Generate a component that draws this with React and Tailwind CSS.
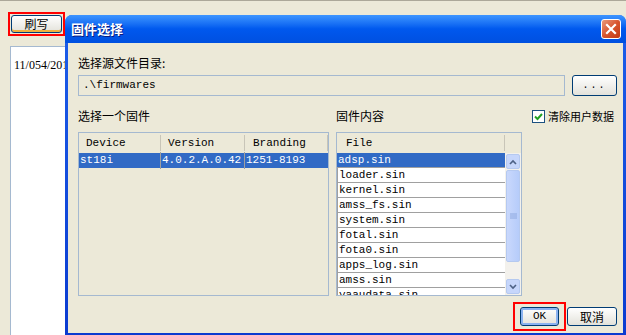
import React from "react";

const cjk = { fontFamily: '"Noto Sans CJK SC", "Liberation Sans", sans-serif' };
const mono = { fontFamily: '"Liberation Mono", "DejaVu Sans Mono", monospace' };

const files = [
  "adsp.sin",
  "loader.sin",
  "kernel.sin",
  "amss_fs.sin",
  "system.sin",
  "fotal.sin",
  "fota0.sin",
  "apps_log.sin",
  "amss.sin",
  "yaaudata.sin",
];

const XpButton = ({ children, focus, className = "" }) => (
  <div
    className={`flex items-center justify-center rounded-[3px] border border-[#003C74] bg-gradient-to-b from-white to-[#E3E2DA] text-[12px] text-black ${
      focus ? "shadow-[inset_0_0_0_2px_#8BB2F0]" : ""
    } ${className}`}
  >
    {children}
  </div>
);

export default function App() {
  return (
    <div className="relative h-[335px] w-[626px] overflow-hidden border-t border-[#ACA899] bg-[#ECE9D8]">
      {/* background window */}
      <div className="ml-[8px] mt-[11px] w-[57px] border-2 border-[#FF0000] p-[1px]">
        <XpButton className="h-[18px] shadow-[inset_0_-2px_0_#F0B040]">
          <span style={cjk}>刷写</span>
        </XpButton>
      </div>
      <div className="ml-[10px] mt-[10px] h-[300px] w-[60px] border border-[#A5B9D0] bg-white pl-[3px] pt-[4px]">
        <span className="whitespace-nowrap text-[12px] text-black" style={{ fontFamily: '"Liberation Serif", serif' }}>
          11/054/2011
        </span>
      </div>

      {/* dialog */}
      <div className="absolute left-[65px] top-[14px] flex h-[321px] w-[561px] flex-col rounded-t-[7px] bg-gradient-to-b from-[#1E5EEA] to-[#0B3BD0]">
        <div className="flex h-[28px] items-center justify-between rounded-t-[7px] bg-gradient-to-b from-[#3D95FF] via-[#0058EE] to-[#0050E0] pl-[6px] pr-[5px]">
          <span className="text-[13px] font-bold text-white [text-shadow:1px_1px_0_#0A1E80]" style={cjk}>
            固件选择
          </span>
          <div className="flex h-[20px] w-[20px] items-center justify-center rounded-[3px] border border-white bg-gradient-to-br from-[#E89A7C] via-[#D8542E] to-[#C23A14]">
            <svg width="12" height="12" viewBox="0 0 12 12">
              <path d="M2 2 L10 10 M10 2 L2 10" stroke="white" strokeWidth="2.2" strokeLinecap="square" />
            </svg>
          </div>
        </div>

        <div className="mx-[3px] mb-[3px] flex flex-1 flex-col bg-[#ECE9D8] pl-[10px] pr-[6px] pt-[11px] text-[12px] text-black" style={cjk}>
          <div className="h-[18px] leading-[18px]">选择源文件目录:</div>
          <div className="mt-[3px] flex h-[21px] gap-[7px]">
            <div className="flex flex-1 items-center border border-[#A5B9D0] bg-[#ECE9D8] pl-[4px] text-[11px]" style={mono}>
              .\firmwares
            </div>
            <XpButton className="w-[45px] text-[#9A8F9A]">
              <span style={mono} className="text-[10px] tracking-[2px]">...</span>
            </XpButton>
          </div>

          <div className="mt-[13px] flex h-[14px] items-center whitespace-nowrap">
            <div className="w-[258px] shrink-0">选择一个固件</div>
            <div className="w-[196px] shrink-0">固件内容</div>
            <div className="flex shrink-0 items-center gap-[3px]">
              <div className="flex h-[13px] w-[13px] items-center justify-center border border-[#1C5180] bg-white">
                <svg width="9" height="9" viewBox="0 0 9 9">
                  <path d="M1 4.5 L3.5 7 L8 2" stroke="#21A121" strokeWidth="2" fill="none" />
                </svg>
              </div>
              <span className="text-[11px]">清除用户数据</span>
            </div>
          </div>

          <div className="mt-[9px] flex h-[164px] gap-[7px]" style={mono}>
            {/* firmware list */}
            <div className="flex w-[251px] shrink-0 flex-col border border-[#A5B9D0] bg-[#ECE9D8]">
              <div className="flex h-[20px] items-center text-[11px]">
                <div className="w-[82px] border-r border-[#C8C5B8] pl-[7px]">Device</div>
                <div className="w-[84px] border-r border-[#C8C5B8] pl-[7px]">Version</div>
                <div className="w-[83px] border-r border-[#C8C5B8] pl-[8px]">Branding</div>
              </div>
              <div className="flex h-[15px] items-center whitespace-nowrap bg-[#316AC5] text-[11px] text-white">
                <div className="w-[82px] border-r border-[#A0A0A0] pl-[1px]">st18i</div>
                <div className="w-[84px] border-r border-[#A0A0A0] pl-[1px]">4.0.2.A.0.42</div>
                <div className="w-[83px] pl-[1px]">1251-8193</div>
              </div>
            </div>

            {/* file list */}
            <div className="flex w-[186px] shrink-0 flex-col border border-[#A5B9D0] bg-[#ECE9D8]">
              <div className="flex h-[20px] items-center text-[11px]">
                <div className="w-[168px] border-r border-[#C8C5B8] pl-[9px]">File</div>
              </div>
              <div className="flex flex-1 overflow-hidden">
                <div className="flex w-[168px] flex-col">
                  {files.map((f, i) => (
                    <div
                      key={f}
                      className={`flex h-[15px] shrink-0 items-center border-b border-[#A0A0A0] pl-[1px] text-[11px] ${
                        i === 0 ? "bg-[#316AC5] text-white" : "border-l bg-white"
                      }`}
                    >
                      {f}
                    </div>
                  ))}
                </div>
                <div className="flex w-[16px] flex-col bg-[#F3F1EC] p-[1px]">
                  <div className="flex h-[15px] items-center justify-center rounded-[2px] border border-[#B5C9F0] bg-[#C6D6FB]">
                    <svg width="8" height="6" viewBox="0 0 8 6">
                      <path d="M1 5 L4 2 L7 5" stroke="#4D6185" strokeWidth="1.6" fill="none" />
                    </svg>
                  </div>
                  <div className="mt-[1px] flex h-[92px] items-center justify-center rounded-[2px] border border-[#B5C9F0] bg-gradient-to-r from-[#C9D8FC] to-[#B6CCFA]">
                    <svg width="7" height="7" viewBox="0 0 7 7">
                      <path d="M0 1 H7 M0 3 H7 M0 5 H7" stroke="#8EA8DF" strokeWidth="1" />
                    </svg>
                  </div>
                  <div className="flex-1" />
                  <div className="flex h-[15px] items-center justify-center rounded-[2px] border border-[#B5C9F0] bg-[#C6D6FB]">
                    <svg width="8" height="6" viewBox="0 0 8 6">
                      <path d="M1 1 L4 4 L7 1" stroke="#4D6185" strokeWidth="1.6" fill="none" />
                    </svg>
                  </div>
                </div>
              </div>
            </div>
          </div>

          <div className="mt-[6px] flex justify-end gap-[1px]">
            <div className="border-2 border-[#FF0000] px-[5px] py-[3px]">
              <XpButton focus className="h-[19px] w-[39px]">
                <span style={mono} className="text-[11px]">OK</span>
              </XpButton>
            </div>
            <div className="pt-[5px]">
              <XpButton className="h-[19px] w-[50px]">取消</XpButton>
            </div>
          </div>
        </div>
      </div>
    </div>
  );
}
